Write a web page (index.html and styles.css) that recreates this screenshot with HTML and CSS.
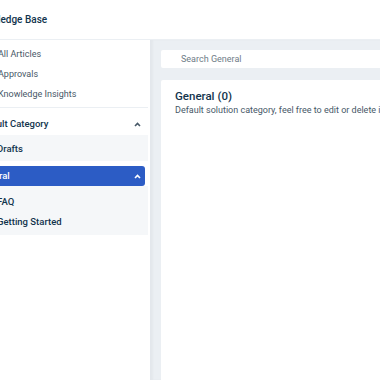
FILE: index.html
```html
<!DOCTYPE html>
<html lang="en">
<head>
  <meta charset="UTF-8" />
  <meta name="viewport" content="width=device-width, initial-scale=1.0" />
  <title>Knowledge Base</title>
  <link rel="stylesheet" href="styles.css">
</head>
<body>

  <div class="app">
    <header class="topbar">
      <h1>Knowledge Base</h1>
    </header>

    <div class="layout">
      <aside class="sidebar">
        <ul class="nav">
          <li><a href="#">All Articles</a></li>
          <li><a href="#">Approvals</a></li>
          <li><a href="#">Knowledge Insights</a></li>
        </ul>

        <div class="category">
          <div class="category-head">
            <span>Default Category</span>
            <svg class="caret" width="7" height="5" viewBox="0 0 7 5"><path d="M1 4 L3.5 1.5 L6 4" fill="none" stroke="currentColor" stroke-width="1.6"/></svg>
          </div>
          <ul class="folders">
            <li><a href="#">Drafts</a></li>
          </ul>
        </div>

        <div class="category open">
          <div class="category-head active">
            <span>General</span>
            <svg class="caret" width="7" height="5" viewBox="0 0 7 5"><path d="M1 4 L3.5 1.5 L6 4" fill="none" stroke="currentColor" stroke-width="1.6"/></svg>
          </div>
          <ul class="folders">
            <li><a href="#">FAQ</a></li>
            <li><a href="#">Getting Started</a></li>
          </ul>
        </div>
      </aside>

      <main class="main">
        <div class="search">
          <input type="text" placeholder="Search General" />
        </div>
        <section class="card">
          <h2>General (0)</h2>
          <p>Default solution category, feel free to edit or delete it</p>
        </section>
      </main>
    </div>
  </div>

</body>
</html>
```

FILE: styles.css
```css
html, body { margin: 0; padding: 0; height: 100%; overflow: hidden; }
body { font-family: Roboto, "Liberation Sans", Arial, sans-serif; color: #12344d; background: #fff; }
ul { list-style: none; margin: 0; padding: 0; }
a { text-decoration: none; color: inherit; }

.app { margin-left: -50px; height: 100%; display: flex; flex-direction: column; }

.topbar { height: 39px; border-bottom: 1px solid #ebeff3; display: flex; align-items: center; padding-left: 23px; flex-shrink: 0; }
.topbar h1 { margin: 0; font-size: 10px; font-weight: 500; }

.layout { flex: 1; display: flex; }

.sidebar { width: 201px; flex-shrink: 0; border-right: 1px solid #e3e7ec; background: #fff; padding-right: 2px; box-sizing: border-box; }
.nav { padding: 4px 0 3px; border-bottom: 1px solid #ebeff3; }
.nav li a { display: block; line-height: 20px; font-size: 9px; color: #475867; padding-left: 48px; }

.category-head { display: flex; justify-content: space-between; align-items: center; font-size: 9.5px; font-weight: 500; padding: 8px 7px 3px 27px; line-height: 16px; }
.category-head.active { background: #2c5cc5; color: #fff; border-radius: 0 3px 3px 0; margin: 5px 3px 0 0; padding: 2px 4px 2px 27px; }
.caret { color: #475867; }
.category-head.active .caret { color: #fff; }

.folders { background: #f5f7f9; padding: 4px 0 2px; }
.open .folders { padding: 6px 0 3px; }
.folders li a { display: block; line-height: 20px; font-size: 9.5px; font-weight: 500; color: #12344d; padding-left: 47px; }

.main { flex: 1; background: #ebeff3; padding: 7px 0 0 10px; display: flex; flex-direction: column; gap: 12px; box-shadow: inset 2px 0 2px rgba(0,0,0,0.03); }
.search input { width: 100%; box-sizing: border-box; height: 18px; border: 0; border-radius: 2px 0 0 2px; background: #fff; padding: 0 0 0 20px; font: 9px Roboto, "Liberation Sans", Arial, sans-serif; outline: none; }
.search input::placeholder { color: #6f7c87; }
.card { flex: 1; background: #fff; border-radius: 2px 0 0 0; padding: 9px 14px; }
.card h2 { margin: 0; font-size: 11.5px; font-weight: 500; line-height: 14px; }
.card p { margin: 0; font-size: 9px; color: #475867; line-height: 14px; white-space: nowrap; }
```
